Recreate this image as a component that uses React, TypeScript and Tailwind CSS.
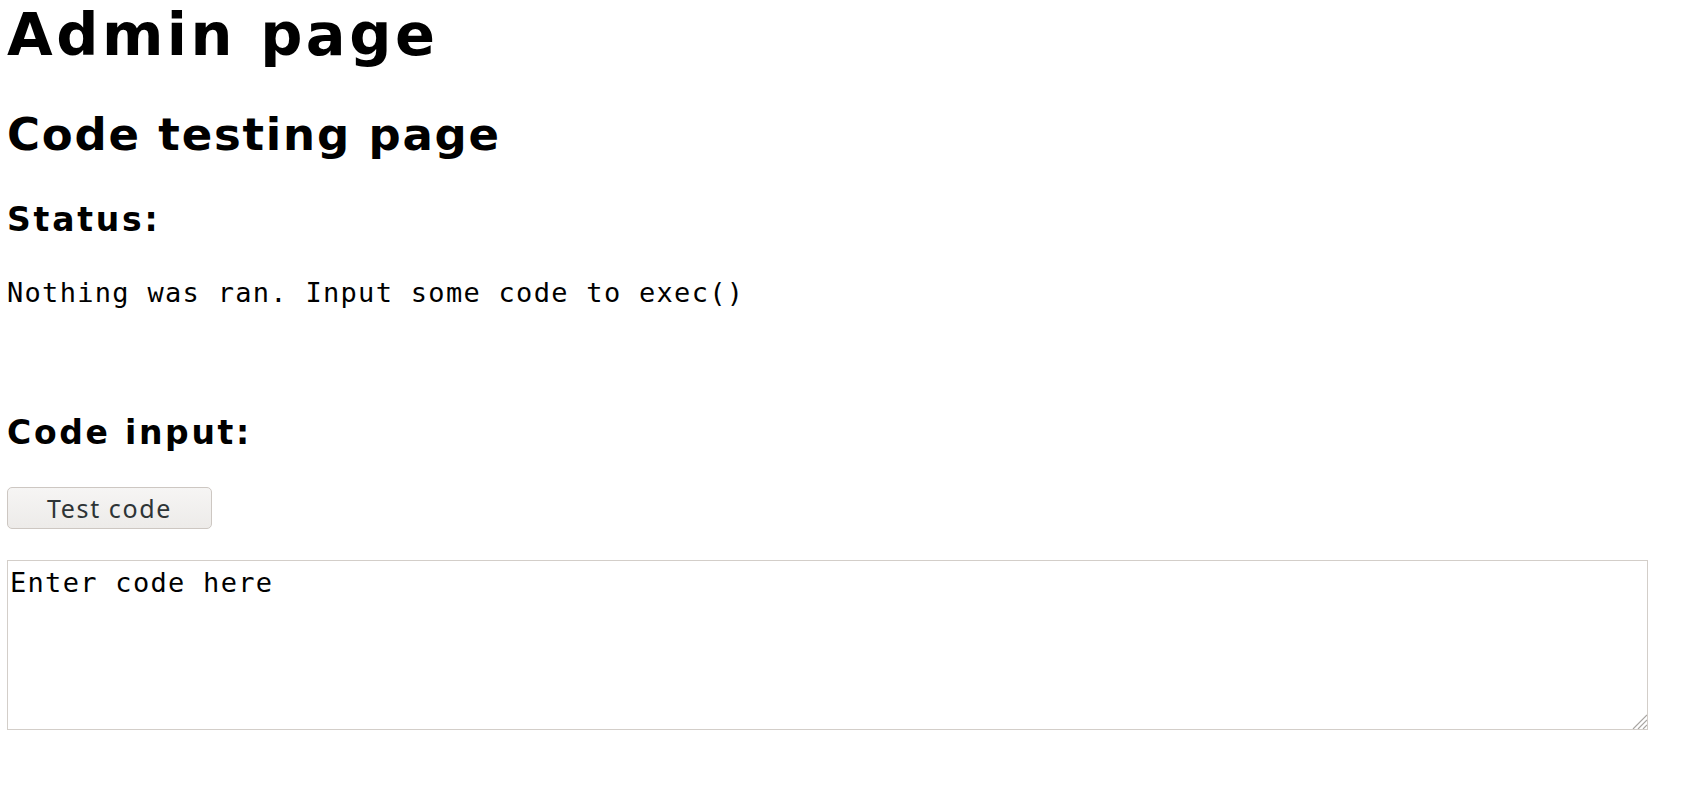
import {useState} from "react";

const SANS = "font-['DejaVu_Sans',sans-serif]";

function ResizeGrip() {
    return (
        <svg className="pointer-events-none absolute right-[1px] bottom-[1px]" width="15" height="15" viewBox="0 0 15 15">
            <path d="M15 1 L1 15 M15 6 L6 15 M15 11 L11 15" stroke="#a8a5a2" strokeWidth="1.2"/>
        </svg>
    )
}

export default function App() {

    const [code, setCode] = useState('Enter code here');

    return (
        <div className="flex min-h-screen flex-col items-start bg-white pl-[7px] text-black">
            <h1 className={`${SANS} mt-[5px] text-[59px] leading-[59px] font-bold tracking-[3.5px]`}>Admin page</h1>
            <h2 className={`${SANS} mt-[48px] text-[45px] leading-[45px] font-bold tracking-[1.8px]`}>Code testing page</h2>
            <h3 className={`${SANS} mt-[46px] text-[33px] leading-[33px] font-bold tracking-[2.8px]`}>Status:</h3>
            <p className="mt-[44px] font-['DejaVu_Sans_Mono',monospace] text-[27px] leading-[26px] tracking-[1.3px]">
                Nothing was ran. Input some code to exec()
            </p>
            <h3 className={`${SANS} mt-[110px] text-[33px] leading-[33px] font-bold tracking-[2.7px]`}>Code input:</h3>
            <button
                className="mt-[38px] flex h-[42px] w-[205px] items-center justify-center rounded-[5px] border border-[#cdc7c2] bg-gradient-to-b from-[#f6f5f4] to-[#edebe9] font-['Noto_Sans',sans-serif] text-[25px] leading-none tracking-[1.6px] text-[#2e3436]">
                Test code
            </button>
            <div className="relative mt-[31px]">
                <textarea
                    className="block h-[170px] w-[1641px] resize-none border border-[#d3cec9] bg-white pt-[7px] pl-[2px] font-['DejaVu_Sans_Mono',monospace] text-[27px] leading-[30px] tracking-[1.3px] text-black outline-none"
                    value={code} onChange={event => setCode(event.target.value)}/>
                <ResizeGrip/>
            </div>
        </div>
    )
}
